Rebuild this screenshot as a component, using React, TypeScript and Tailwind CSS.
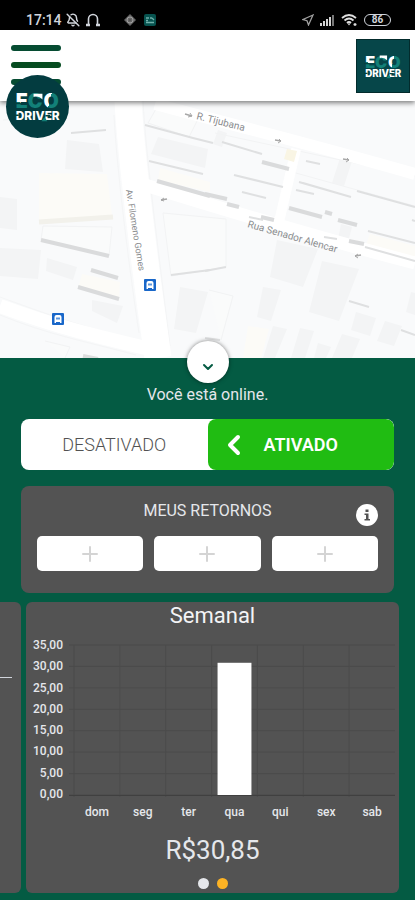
import { useState } from 'react';
import { BellOff, ChevronDown, ChevronLeft, Plus } from 'lucide-react';

const week = [
  { day: 'dom', value: 0 },
  { day: 'seg', value: 0 },
  { day: 'ter', value: 0 },
  { day: 'qua', value: 30.85 },
  { day: 'qui', value: 0 },
  { day: 'sex', value: 0 },
  { day: 'sab', value: 0 },
];

const ticks = ['35,00', '30,00', '25,00', '20,00', '15,00', '10,00', '5,00', '0,00'];

function Logo({ className }: { className: string }) {
  return (
    <svg viewBox="0 0 64 64" className={className} role="img" aria-label="Eco Driver">
      <defs>
        <linearGradient id="logo-e" gradientUnits="userSpaceOnUse" x1="14" y1="18" x2="10" y2="34">
          <stop offset="0.58" stopColor="#ffffff" />
          <stop offset="0.58" stopColor="#128078" />
        </linearGradient>
        <linearGradient id="logo-o" gradientUnits="userSpaceOnUse" x1="38" y1="24" x2="54" y2="28">
          <stop offset="0.42" stopColor="#ffffff" />
          <stop offset="0.42" stopColor="#128078" />
        </linearGradient>
      </defs>
      <text fontFamily="Inter, sans-serif" fontWeight="900" fontSize="20">
        <tspan x="10" y="34" fill="url(#logo-e)">E</tspan>
        <tspan x="22" y="34" fill="#128078">C</tspan>
        <tspan x="38" y="34" fill="url(#logo-o)">O</tspan>
        <tspan x="10" y="46" fontSize="12" fontWeight="800" fill="#ffffff">DRIVER</tspan>
      </text>
      <path d="M28 19h9v6q-3-4-9-3z" fill="#ffffff" />
      <path d="M9 29h6M9 41h4M40 41.500h5" stroke="#04413f" strokeWidth="1.500" />
      <path d="M36 47l3-4 3 4z" fill="#128078" />
    </svg>
  );
}

function StatusBar() {
  return (
    <div className="flex h-[30px] items-center justify-between bg-black pt-2.5 pr-6 pl-[26px] text-gray-300">
      <div className="flex items-center">
        <span className="w-10 text-sm leading-5 font-medium">17:14</span>
        <BellOff className="h-3.5 w-3.5" strokeWidth={2.5} />
        <svg viewBox="0 0 14 14" className="ml-1.5 h-3.5 w-3.5" fill="none" stroke="currentColor" strokeWidth="1.600">
          <path d="M2.500 12V6a4.500 4.500 0 0 1 9 0v6" />
          <path d="M0 12h4M10 12h4" strokeWidth="2.400" />
        </svg>
        <svg viewBox="0 0 12 12" className="ml-6 h-3 w-3">
          <path d="M6 0l6 6-6 6-6-6z" fill="#666666" />
          <circle cx="6" cy="6" r="3" fill="none" stroke="#a0a0a0" />
          <circle cx="6" cy="6" r="1" fill="#555555" />
        </svg>
        <svg viewBox="0 0 12 12" className="ml-2 h-3 w-3">
          <rect width="12" height="12" rx="2" fill="#07534f" />
          <path d="M2 4h3M2 6.500h2M6 4h2M2 8.500h8M8 4l2 2" stroke="#6fb0aa" strokeWidth="1.300" />
        </svg>
      </div>
      <div className="flex items-center gap-1.5">
        <svg viewBox="0 0 12 12" className="h-3 w-3" fill="none" stroke="#a0a0a0" strokeWidth="1.300">
          <path d="M11 1L1 5.500l4 1.200L6.500 11z" />
        </svg>
        <svg viewBox="0 0 15 12" className="h-3 w-[15px]" fill="#d4d4d4">
          <path d="M0 9h2v3H0zM3 7h2v5H3zM6 5h2v7H6zM9 3h2v9H9z" />
          <path d="M12 1h2v11h-2z" fill="#777777" />
        </svg>
        <svg viewBox="0 0 17 14" className="h-3.5 w-[17px]" fill="none" stroke="#dedede" strokeWidth="1.800">
          <path d="M1 5q7-6 14 0M3.500 7.500q4.500-4 9 0M6 10q2-2 4 0" />
          <path d="M6.500 10.500L8 12.500l1.500-2z" fill="#dedede" stroke="none" />
          <path d="M14 10v3M12.500 11.500h3" strokeWidth="1.300" />
        </svg>
        <span className="flex h-3 w-[27px] items-center justify-center rounded-full border border-gray-300 text-[10px] leading-none font-bold">
          86
        </span>
      </div>
    </div>
  );
}

function Header() {
  return (
    <header className="relative z-10 flex h-[71px] items-start justify-between bg-white pr-[5px] pl-[11px] shadow-[0_2px_5px_rgba(0,0,0,0.5)]">
      <button type="button" aria-label="Menu" className="mt-[15px] flex w-[50px] flex-col gap-[11px]">
        <span className="h-1.5 w-full rounded-full bg-[#064c32]" />
        <span className="h-1.5 w-full rounded-full bg-[#064c20]" />
        <span className="h-1.5 w-full rounded-full bg-[#064c32]" />
      </button>
      <Logo className="mt-[9px] h-[54px] w-[54px] border border-[#032b2c] bg-[#064649]" />
      <div className="absolute top-[45px] left-1.5 rounded-full bg-[#033c40]">
        <Logo className="h-[63px] w-[63px]" />
      </div>
    </header>
  );
}

function BusStop({ x, y }: { x: number; y: number }) {
  return (
    <g transform={`translate(${x} ${y})`}>
      <rect width="12" height="12" rx="1" fill="#1967c9" />
      <path d="M2.500 10V4q0-2 2-2h3q2 0 2 2v6h-1.500V9H4v1z" fill="#ffffff" />
      <path d="M4 4.500h4v2H4z" fill="#5d97dd" />
    </g>
  );
}

function CityMap() {
  return (
    <svg viewBox="0 101 415 257" preserveAspectRatio="xMidYMid slice" className="block w-full" role="img" aria-label="Mapa">
      <rect y="101" width="415" height="257" fill="#f9fafb" />

      {/* blocks */}
      <g fill="#f3f4f5">
        <path d="M67 140l32 4 4 28-38-3zM0 197l17 2v31l-17-2zM0 248l41 2-3 29-38-3zM47 258l30 9-4 13-27-9zM92 300l31 6-6 17-25-12z" />
        <path d="M158 137l50 12-3 19-54-14zM180 287l28 5-12 41-22-4zM277 240l41 9-15 38-33-10zM322 261l37 8-20 52-30-9zM263 287l18 3-10 31-14-4zM340 158l12 3-8 25-12-3z" />
        <path d="M218 130l9 3-5 14-9-3zM356 312l20 6-6 18-19-6zM385 321l17 5-8 20-17-5zM273 326l14 3-12 29h-12zM300 328l14 3-9 27h-14zM342 334l18 5-8 19h-20zM411 292l4 1v22l-9-3z" />
        <path d="M341 224l11 3-4 15-10-2zM318 343l13 4-5 11h-12z" />
      </g>
      <g fill="#fcfbf7">
        <path d="M39 173l68 1 5 42-73 5zM82 274l38 8-1 18-41-12zM160 168l50 14v10l-52-12zM370 234l45 12v15l-50-14zM248 326l21 3-8 29h-18z" />
      </g>
      <g fill="#fafbfb" stroke="#f2f3f4">
        <path d="M43 226l69 1-3 29-68-16zM163 213l63 6v48l-55 9zM3 120l65-5M148 123l8-14 43 8-10 20zM209 290l24 6-12 44M45 341l25 6-5 11" />
        <path d="M215 133l200 43M285 170l130 36" fill="none" />
      </g>

      {/* streets */}
      <g fill="none" stroke="#f4f5f6">
        <path d="M114 115c3 60 17 165 25 218M143 101c3 60 20 185 27 245M0 297c60 22 90 32 134 42M0 315c50 20 80 25 136 40" />
      </g>
      <g fill="none" stroke="#ffffff">
        <path d="M128 101c3 55 18 175 30 257" strokeWidth="27" />
        <path d="M0 306c60 22 95 30 158 45" strokeWidth="14" />
        <path d="M145 185c90 28 170 52 270 78" strokeWidth="13" />
        <path d="M155 104c90 24 170 44 260 70" strokeWidth="12" />
        <path d="M296 149l-17 73" strokeWidth="10" />
      </g>
      <path d="M287 149l10 2-3 11-10-3z" fill="#f9f5e4" />

      {/* building shadows */}
      <g fill="none" stroke="#dfe0e1" strokeWidth="2">
        <path d="M145 125l48 13 20 5M149 161l54 13M71 133l35-3M171 275l39-5M222 142l40 12" />
        <path d="M234 175l49 12M303 183l48 14M357 191l58 16M299 182l52 15M242 192l24 6M296 190l18 4M306 161l14 3M249 217l14 3" />
        <path d="M368 231l47 12M365 247l50 14M324 237l13 2M349 301l20 6M401 330l14 5M205 338l15 2M412 220l3 1M205 271l21-4" />
      </g>
      <g fill="none" stroke="#dadbdc" strokeWidth="4">
        <path d="M157 181l53 15M205 194l22 5M262 162l27 7M289 208l33 9M338 220l19 5M227 204l12 3M261 217l13 3M349 241l15 3M325 212l7 2" />
        <path d="M41 240l68 16M91 270l27 8M78 287l41 12" />
      </g>
      <path d="M39 222l74-5" stroke="#f2f1eb" strokeWidth="5" />
      <path d="M83 356l15 3" stroke="#dcdddd" strokeWidth="4" />

      {/* one-way arrows */}
      <g stroke="#a8a8a8" fill="none">
        <path d="M185 114l7 2M275 140l6 1M343 159l6 1M161 200l6-1M355 256l6-1" strokeWidth="1.500" />
        <path d="M190 113l2 3-4 1M279 139l2 2-3 2M347 158l2 2-3 2M164 198l-3 2 3 1M358 254l-3 2 3 2" />
      </g>

      <g fontFamily="Roboto, sans-serif" fill="#8b8d8f">
        <text transform="translate(196 119) rotate(14)" fontSize="10">R. Tijubana</text>
        <text transform="translate(126 190) rotate(81)" fontSize="9">Av. Filomeno Gomes</text>
        <text transform="translate(247 227) rotate(16)" fontSize="10">Rua Senador Alencar</text>
      </g>

      <BusStop x={144} y={279} />
      <BusStop x={52} y={313} />
    </svg>
  );
}

function WeeklyChart() {
  return (
    <div className="mt-[7px] pr-1 text-xs font-medium text-gray-200">
      <div className="flex gap-[11px]">
        <div className="flex w-[37px] flex-col justify-between text-right leading-4">
          {ticks.map(tick => (
            <span key={tick}>{tick}</span>
          ))}
        </div>
        <svg viewBox="0 0 322 165" preserveAspectRatio="none" className="h-[165px] min-w-0 flex-1 overflow-visible">
          <g stroke="#4b4b4b">
            {ticks.map((tick, i) => (
              <line key={tick} x1="-5" x2="322" y1={8 + (i * 150) / 7} y2={8 + (i * 150) / 7} />
            ))}
            {week.map((item, i) => (
              <line key={item.day} x1={i * 46} x2={i * 46} y1="8" y2="160" />
            ))}
          </g>
          <path d="M-5 158.500h327" stroke="#404040" />
          {week.map((item, i) => {
            const height = (item.value / 35) * 150;
            return item.value > 0 ? (
              <rect key={item.day} x={i * 46 + 6} y={158 - height} width="34" height={height} fill="#ffffff" />
            ) : null;
          })}
        </svg>
      </div>
      <div className="grid grid-cols-7 pl-12 text-center leading-5">
        {week.map(item => (
          <span key={item.day}>{item.day}</span>
        ))}
      </div>
    </div>
  );
}

export default function App() {
  const [online, setOnline] = useState(true);

  return (
    <div className="flex min-h-screen flex-col bg-[#045b43] font-[Roboto,sans-serif]">
      <StatusBar />
      <Header />
      <CityMap />

      <main className="relative pt-6 pb-2">
        <button
          type="button"
          aria-label="Recolher mapa"
          className="absolute -top-[17px] left-1/2 flex h-[42px] w-[42px] -translate-x-1/2 items-center justify-center rounded-full bg-white pt-2.5 text-[#045b43] shadow-[0_0_4px_rgba(0,0,0,0.5)]"
        >
          <ChevronDown className="h-4 w-4" strokeWidth={3} />
        </button>

        <div className="px-[21px]">
          <p className="text-center text-base leading-[26px] text-gray-200">
            {online ? 'Você está online.' : 'Você está offline.'}
          </p>

          <div className="mt-[11px] grid h-[51px] grid-cols-2 overflow-hidden rounded-lg bg-white">
            <button type="button" onClick={() => setOnline(false)} className="text-lg font-light text-neutral-600">
              DESATIVADO
            </button>
            <button
              type="button"
              onClick={() => setOnline(true)}
              className="grid grid-cols-[1fr_auto_1fr] items-center rounded-lg bg-[#20bc12] text-lg font-semibold text-white"
            >
              <ChevronLeft className="ml-2.5 h-8 w-8" strokeWidth={3} />
              ATIVADO
            </button>
          </div>

          <section className="mt-4 rounded-lg bg-[#535353] px-4 pt-3 pb-[22px]">
            <div className="grid grid-cols-[1fr_auto_1fr] items-start">
              <h2 className="col-start-2 text-base leading-[26px] text-gray-200">MEUS RETORNOS</h2>
              <button type="button" aria-label="Informações" className="mt-1.5 justify-self-end">
                <svg viewBox="0 0 22 22" className="h-[22px] w-[22px]">
                  <circle cx="11" cy="11" r="11" fill="#ffffff" />
                  <path d="M9.500 5.500h3v2.500h-3zM8.500 9.500h4V15h1.500v1.500H8.500V15H10v-4H8.500z" fill="#535353" />
                </svg>
              </button>
            </div>
            <div className="mt-2.5 grid grid-cols-3 gap-[11px]">
              {[1, 2, 3].map(slot => (
                <button
                  key={slot}
                  type="button"
                  aria-label={`Adicionar retorno ${slot}`}
                  className="flex h-[35px] items-center justify-center rounded-[5px] bg-white text-neutral-300"
                >
                  <Plus className="h-6 w-6" strokeWidth={2} />
                </button>
              ))}
            </div>
          </section>
        </div>

        <div className="mt-[9px] flex gap-[5px] overflow-hidden pr-4">
          {/* edge of the previous slide */}
          <div className="w-[21px] shrink-0 rounded-r-md bg-[#535353] pt-[75px]">
            <div className="mr-[9px] h-px bg-gray-300" />
          </div>
          <section className="min-w-0 flex-1 rounded-md bg-[#535353] pb-1">
            <h2 className="text-center text-[22px] leading-[28px] text-gray-100">Semanal</h2>
            <WeeklyChart />
            <p className="mt-2.5 text-center text-[26px] leading-9 text-gray-200">R$30,85</p>
            <div className="mt-2.5 flex justify-center gap-2">
              <button type="button" aria-label="Slide anterior" className="h-[11px] w-[11px] rounded-full bg-gray-200" />
              <button type="button" aria-label="Slide semanal" className="h-[11px] w-[11px] rounded-full bg-[#fdb324]" />
            </div>
          </section>
        </div>
      </main>
    </div>
  );
}
